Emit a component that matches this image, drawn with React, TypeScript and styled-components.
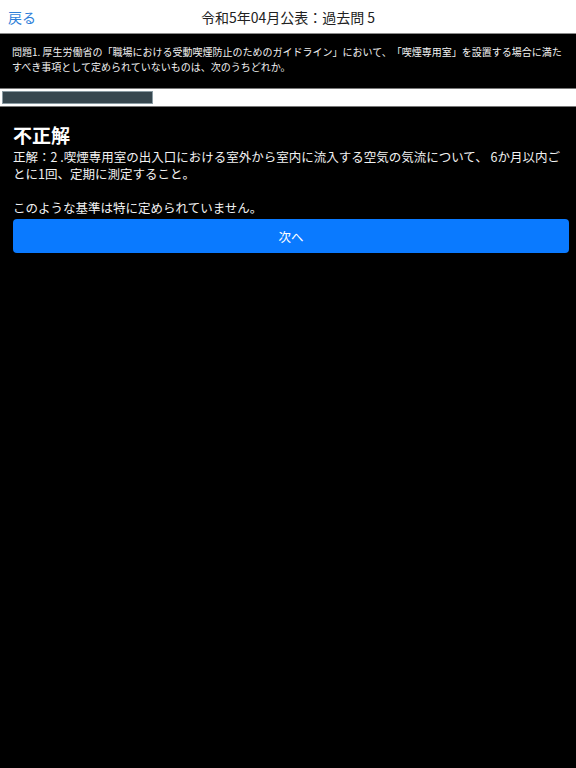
import styled, { createGlobalStyle } from "styled-components";

const GlobalStyle = createGlobalStyle`
  html, body {
    margin: 0;
    padding: 0;
    background: #000;
  }
  body {
    font-family: "Noto Sans CJK JP", "Noto Sans", sans-serif;
    color: #fff;
    text-spacing-trim: space-all;
  }
`;

const progress = 150 / 570;

export default function App() {
  return (
    <Page>
      <GlobalStyle />
      <Header>
        <BackLink>戻る</BackLink>
        <HeaderTitle>令和5年04月公表：過去問 5</HeaderTitle>
      </Header>
      <Question>
        問題1. 厚生労働省の「職場における受動喫煙防止のためのガイドライン」において、「喫煙専用室」を設置する場合に満たすべき事項として定められていないものは、次のうちどれか。
      </Question>
      <ProgressTrack>
        <ProgressFill style={{ width: `${progress * 100}%` }} />
      </ProgressTrack>
      <Result>
        <ResultTitle>不正解</ResultTitle>
        <Explanation>
          正解：2 .喫煙専用室の出入口における室外から室内に流入する空気の気流について、 6か月以内ごとに1回、定期に測定すること。
        </Explanation>
        <Explanation>&nbsp;</Explanation>
        <Explanation>このような基準は特に定められていません。</Explanation>
        <NextButton>次へ</NextButton>
      </Result>
    </Page>
  );
}

const Page = styled.div`
  min-height: 768px;
  background: #000;
`;

const Header = styled.div`
  position: relative;
  display: flex;
  align-items: center;
  justify-content: center;
  height: 33px;
  background: #fff;
  border-bottom: 1px solid #8a8a8a;
`;

const BackLink = styled.span`
  position: absolute;
  left: 8px;
  top: 8px;
  font-size: 14px;
  line-height: 18px;
  color: #2f7fd9;
`;

const HeaderTitle = styled.span`
  font-size: 14px;
  line-height: 18px;
  color: #222;
`;

const Question = styled.div`
  padding: 10px 12px 0 12px;
  font-size: 10px;
  line-height: 15px;
  color: #f2f2f2;
  height: 44px;
  box-sizing: content-box;
`;

const ProgressTrack = styled.div`
  height: 13px;
  padding: 2px 2px;
  background: #fff;
  border-top: 1px solid #777;
  border-bottom: 1px solid #777;
`;

const ProgressFill = styled.div`
  height: 100%;
  box-sizing: border-box;
  background: #37474f;
  border: 1px solid #8a9ba3;
`;

const Result = styled.div`
  padding: 15px 7px 0 13px;
  display: flex;
  flex-direction: column;
`;

const ResultTitle = styled.div`
  font-size: 19px;
  line-height: 26px;
  font-weight: bold;
  color: #fff;
`;

const Explanation = styled.div`
  font-size: 12.5px;
  line-height: 17px;
  color: #f2f2f2;
`;

const NextButton = styled.button`
  margin-top: 3px;
  height: 34px;
  border: none;
  border-radius: 4px;
  background: #0a7aff;
  color: #fff;
  font-family: inherit;
  font-size: 12.5px;
  cursor: pointer;
`;
